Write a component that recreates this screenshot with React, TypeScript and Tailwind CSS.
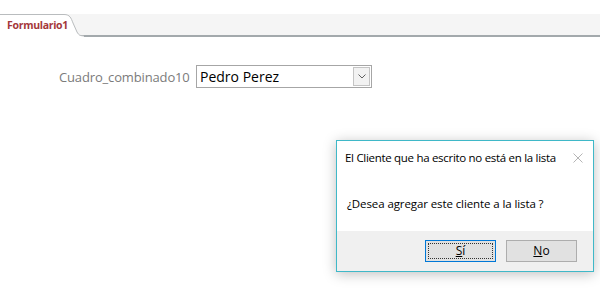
import * as React from 'react';

const font = { fontFamily: '"Open Sans", "Noto Sans", sans-serif' };

const App: React.FunctionComponent = () => {
    return <>
        <div className="relative w-[600px] h-[291px] bg-white overflow-hidden" style={font}>
            {/* tab strip */}
            <div className="mt-[14px] h-[23px] bg-[#f5f5f5] border-b-2 border-[#a3a9ac] flex">
                <div className="relative w-[84px] h-[23px]">
                    <svg className="absolute left-0 top-0" width="84" height="23" viewBox="0 0 84 23">
                        <path d="M0 0.5 H64 C70 0.5 71 4 73 9 L77 18 C79 21.5 80 21.5 84 22 L84 23 L0 23 Z" fill="#ffffff" />
                        <path d="M0 0.5 H64 C70 0.5 71 4 73 9 L77 18 C79 21.5 80 21.5 84 22" fill="none" stroke="#b9bcbe" strokeWidth="1" />
                    </svg>
                    <span className="relative block pl-[7px] pt-[4px] text-[10.5px] leading-[14px] font-bold text-[#a4373a] tracking-[-0.3px]">Formulario1</span>
                </div>
            </div>

            {/* form body */}
            <div className="flex items-center pl-[59px] pt-[28px]">
                <span className="text-[13px] text-[#7b7b7b] w-[137px] leading-[22px] tracking-[-0.15px]">Cuadro_combinado10</span>
                <div className="flex w-[176px] h-[23px] border border-[#a6a6a6] bg-white">
                    <span className="flex-1 pl-[3px] text-[14px] leading-[21px] text-black">Pedro Perez</span>
                    <div className="w-[17px] h-[19px] mt-[1px] mr-[1px] border border-[#c4c4c4] bg-[#f2f2f2] flex items-center justify-center">
                        <svg width="8" height="5" viewBox="0 0 8 5">
                            <path d="M0.5 0.5 L4 4 L7.5 0.5" fill="none" stroke="#606060" strokeWidth="1" />
                        </svg>
                    </div>
                </div>
            </div>

            {/* message box */}
            <div className="absolute left-[336px] top-[140px] w-[258px] h-[132px] border border-[#3fb8c8] bg-white shadow-[0_2px_12px_rgba(0,0,0,0.25)] flex flex-col">
                <div className="flex items-center justify-between h-[34px] pl-[8px] pr-[10px]">
                    <span className="text-[11.5px] text-black tracking-[-0.3px]">El Cliente que ha escrito no está en la lista</span>
                    <svg width="10" height="10" viewBox="0 0 10 10">
                        <path d="M0.5 0.5 L9.5 9.5 M9.5 0.5 L0.5 9.5" stroke="#b5b5b5" strokeWidth="1" />
                    </svg>
                </div>
                <div className="h-[56px] pl-[10px] pt-[15px]">
                    <span className="text-[11.5px] text-black tracking-[-0.1px]">¿Desea agregar este cliente a la lista ?</span>
                </div>
                <div className="flex-1 bg-[#f0f0f0] flex justify-end items-start gap-[10px] pt-[9px] pr-[16px]">
                    <button className="w-[71px] h-[22px] border border-[#0078d7] bg-[#e1e1e1] p-[2px]">
                        <div className="w-full h-full border border-dotted border-[#333] flex items-center justify-center text-[12px] leading-[14px] text-black">
                            <span><span className="underline">S</span>í</span>
                        </div>
                    </button>
                    <button className="w-[71px] h-[22px] border border-[#adadad] bg-[#e1e1e1] flex items-center justify-center text-[12px] text-black">
                        <span><span className="underline">N</span>o</span>
                    </button>
                </div>
            </div>
        </div>
    </>;
};

export default App;
